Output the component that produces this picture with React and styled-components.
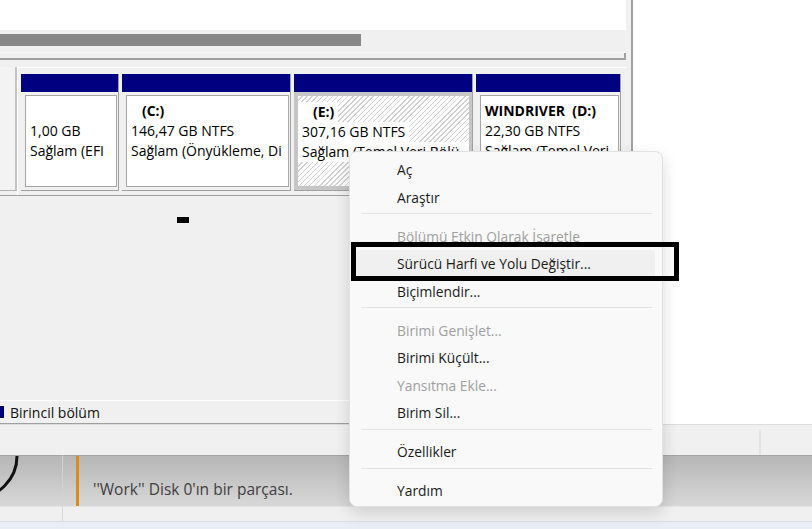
import styled, { createGlobalStyle } from "styled-components";

const GlobalStyle = createGlobalStyle`
  html, body {
    margin: 0;
    padding: 0;
  }
  body {
    width: 812px;
    height: 529px;
    overflow: hidden;
    background: #f0f0f0;
    font-family: "Segoe UI", "Open Sans", sans-serif;
  }
`;

const partitions = [
  { id: "efi", width: 97, label: "", size: "1,00 GB", status: "Sağlam (EFI Sistem Bölümü)" },
  { id: "c", width: 168, label: "   (C:)", size: "146,47 GB NTFS", status: "Sağlam (Önyükleme, Disk Belleği, Kilitlenme Bilgi Dökümü, Temel Veri Bölümü)" },
  { id: "e", width: 178, label: "   (E:)", size: "307,16 GB NTFS", status: "Sağlam (Temel Veri Bölümü)", selected: true },
  { id: "d", width: 144, label: "WINDRIVER  (D:)", size: "22,30 GB NTFS", status: "Sağlam (Temel Veri Bölümü)" },
];

const menu = [
  { text: "Aç" },
  { text: "Araştır" },
  { sep: true },
  { text: "Bölümü Etkin Olarak İşaretle", disabled: true },
  { text: "Sürücü Harfi ve Yolu Değiştir...", hover: true },
  { text: "Biçimlendir..." },
  { sep: true },
  { text: "Birimi Genişlet...", disabled: true },
  { text: "Birimi Küçült..." },
  { text: "Yansıtma Ekle...", disabled: true },
  { text: "Birim Sil..." },
  { sep: true },
  { text: "Özellikler" },
  { sep: true },
  { text: "Yardım" },
];

export default function App() {
  return (
    <Screen>
      <GlobalStyle />
      <TopArea>
        <DiskPane>
          <ListArea />
          <HScroll>
            <Thumb />
          </HScroll>
          <PaneEdge />
          <DiskRow>
            <DiskLabel />
            <Strip>
              {partitions.map((p) => (
                <Partition key={p.id} $w={p.width}>
                  <PartHeader />
                  <PartBody $selected={p.selected}>
                    <PartBox $selected={p.selected}>
                      <Line $bold>{p.label}</Line>
                      <Line>{p.size}</Line>
                      <Line>{p.status}</Line>
                    </PartBox>
                  </PartBody>
                </Partition>
              ))}
            </Strip>
          </DiskRow>
          <EmptyArea>
            <Caret />
          </EmptyArea>
          <Legend>
            <Swatch />
            <LegendText>Birincil bölüm</LegendText>
          </Legend>
        </DiskPane>
        <RightBlank />
      </TopArea>
      <StatusBar>
        <StatusCell />
      </StatusBar>
      <BottomArea>
        <CircleCell>
          <svg width="62" height="51" viewBox="0 0 62 51">
            <circle cx="-25" cy="1" r="42" fill="none" stroke="#111" strokeWidth="3" />
          </svg>
        </CircleCell>
        <NoticeCell>
          <OrangeBar />
          <NoticeText>''Work'' Disk 0'ın bir parçası.</NoticeText>
        </NoticeCell>
        <FooterLeft />
        <FooterRight />
      </BottomArea>
      <BlueStrip />

      <ContextMenu>
        {menu.map((m, i) =>
          m.sep ? (
            <Separator key={i} />
          ) : (
            <MenuItem key={i} $disabled={m.disabled} $hover={m.hover}>
              {m.text}
            </MenuItem>
          )
        )}
      </ContextMenu>
      <Highlight />
    </Screen>
  );
}

const Screen = styled.div`
  position: relative;
  width: 812px;
  height: 529px;
  overflow: hidden;
  display: flex;
  flex-direction: column;
  background: #f0f0f0;
`;

const TopArea = styled.div`
  display: flex;
  height: 424px;
  flex-shrink: 0;
`;

const DiskPane = styled.div`
  width: 633px;
  box-sizing: border-box;
  padding-right: 5px;
  border-right: 2px solid #a0a0a0;
  background: #f0f0f0;
  display: flex;
  flex-direction: column;
`;

const ListArea = styled.div`
  height: 30px;
  background: #ffffff;
`;

const HScroll = styled.div`
  height: 23px;
  box-sizing: border-box;
  padding-top: 4px;
  background: #f0f0f0;
  border-bottom: 1px solid #f8f8f8;
`;

const Thumb = styled.div`
  width: 361px;
  height: 12px;
  background: #888888;
`;

const PaneEdge = styled.div`
  height: 7px;
  box-sizing: border-box;
  border-right: 2px solid #a0a0a0;
  border-bottom: 2px solid #a0a0a0;
  margin-bottom: 7px;
`;

const DiskRow = styled.div`
  display: flex;
  height: 129px;
  box-sizing: border-box;
  border-bottom: 1px solid #a0a0a0;
`;

const DiskLabel = styled.div`
  width: 17px;
  height: 124px;
  box-sizing: border-box;
  background: #f3f3f3;
  border-right: 2px solid #c4c4c4;
  border-bottom: 1px solid #b4b4b4;
`;

const Strip = styled.div`
  flex: 1;
  display: flex;
  gap: 3px;
  align-items: flex-start;
  padding: 6px 0 0 3px;
  border-top: 1px solid #ffffff;
  border-left: 1px solid #ffffff;
`;

const Partition = styled.div`
  width: ${(p) => p.$w}px;
  display: flex;
  flex-direction: column;
  border-right: 1px solid #a0a0a0;
  border-bottom: 1px solid #a0a0a0;
`;

const PartHeader = styled.div`
  height: 18px;
  background: #000080;
`;

const PartBody = styled.div`
  height: 98px;
  box-sizing: border-box;
  display: flex;
  padding: ${(p) => (p.$selected ? "4px 3px 4px 4px" : "3px 1px 3px 4px")};
  background: ${(p) => (p.$selected ? "#c6c6c6" : "#f0f0f0")};
`;

const PartBox = styled.div`
  flex: 1;
  min-width: 0;
  overflow: hidden;
  box-sizing: border-box;
  padding-top: ${(p) => (p.$selected ? "6px" : "5px")};
  border: ${(p) => (p.$selected ? "none" : "1px solid #a6a6a6")};
  background: ${(p) =>
    p.$selected
      ? "repeating-linear-gradient(135deg, #ffffff 0 2.6px, #d2d2d2 2.6px 3.6px)"
      : "#ffffff"};
`;

/* whole characters only: what does not fit wraps onto a hidden second line */
const Line = styled.div`
  width: fit-content;
  max-width: 100%;
  box-sizing: border-box;
  height: 20px;
  overflow: hidden;
  padding: 0 4px 0 4px;
  background: #ffffff;
  color: #000000;
  font-size: 14px;
  line-height: 20px;
  font-weight: ${(p) => (p.$bold ? 700 : 400)};
  white-space: pre-wrap;
  word-break: break-all;
`;

const EmptyArea = styled.div`
  flex: 1;
  padding: 21px 0 0 177px;
`;

const Caret = styled.div`
  width: 12px;
  height: 6px;
  background: #000000;
`;

const Legend = styled.div`
  height: 24px;
  box-sizing: border-box;
  display: flex;
  align-items: center;
  border-top: 1px solid #ffffff;
  border-bottom: 1px solid #a0a0a0;
`;

const Swatch = styled.div`
  width: 12px;
  height: 12px;
  margin-left: -8px;
  box-sizing: border-box;
  background: #000080;
  border: 1px solid #00003a;
`;

const LegendText = styled.span`
  margin-left: 6px;
  font-size: 14px;
  color: #111111;
`;

const RightBlank = styled.div`
  flex: 1;
  background: #ffffff;
`;

const StatusBar = styled.div`
  height: 31px;
  flex-shrink: 0;
  box-sizing: border-box;
  border-top: 1px solid #dcdcdc;
  background: #f0f0f0;
  display: flex;
`;

const StatusCell = styled.div`
  width: 759px;
  margin-top: 5px;
  border-right: 2px solid #e3e3e3;
`;

const BottomArea = styled.div`
  display: grid;
  grid-template-columns: 62px 1fr;
  grid-template-rows: 51px 15px;
  flex-shrink: 0;
`;

const Band = styled.div`
  box-sizing: border-box;
  border-top: 1px solid #a4a4a4;
  background: linear-gradient(#b6b6b6, #d8d8d8);
  overflow: hidden;
`;

const CircleCell = styled(Band)`
  svg {
    display: block;
    margin-top: -1px;
  }
`;

const NoticeCell = styled(Band)`
  display: flex;
  border-left: 1px solid #d2d2d2;
`;

const OrangeBar = styled.div`
  width: 3px;
  margin-left: 13px;
  background: #dc8a1c;
`;

const NoticeText = styled.div`
  align-self: flex-end;
  padding: 0 0 7px 14px;
  font-size: 15.5px;
  line-height: 20px;
  color: #404040;
`;

const FooterLeft = styled.div`
  box-sizing: border-box;
  border-top: 1px solid #e4e4e4;
  background: #f0f0f0;
`;

const FooterRight = styled(FooterLeft)`
  border-left: 1px solid #d8d8d8;
`;

const BlueStrip = styled.div`
  height: 8px;
  flex-shrink: 0;
  box-sizing: border-box;
  border-top: 1px solid #d8dde6;
  background: #e9eef6;
`;

const ContextMenu = styled.div`
  position: absolute;
  left: 349px;
  top: 151px;
  width: 314px;
  box-sizing: border-box;
  padding: 4px 0 1px;
  background: #f9f9f9;
  border: 1px solid #e2e2e2;
  border-radius: 8px;
  box-shadow: 0 6px 16px rgba(0, 0, 0, 0.14);
`;

const MenuItem = styled.div`
  height: 27.5px;
  display: flex;
  align-items: center;
  box-sizing: border-box;
  margin: ${(p) => (p.$hover ? "0 7px 0 6px" : "0")};
  padding-left: ${(p) => (p.$hover ? "41px" : "47px")};
  border-radius: 4px;
  background: ${(p) => (p.$hover ? "#f0f0f0" : "transparent")};
  font-size: 13.8px;
  color: ${(p) => (p.$disabled ? "#a0a0a0" : "#1b1b1b")};
  white-space: nowrap;
`;

const Separator = styled.div`
  height: 1px;
  margin: 2px 10px 8.5px 11px;
  background: #e3e3e3;
`;

const Highlight = styled.div`
  position: absolute;
  left: 351px;
  top: 242px;
  width: 328px;
  height: 39px;
  box-sizing: border-box;
  border: 5px solid #000000;
`;
